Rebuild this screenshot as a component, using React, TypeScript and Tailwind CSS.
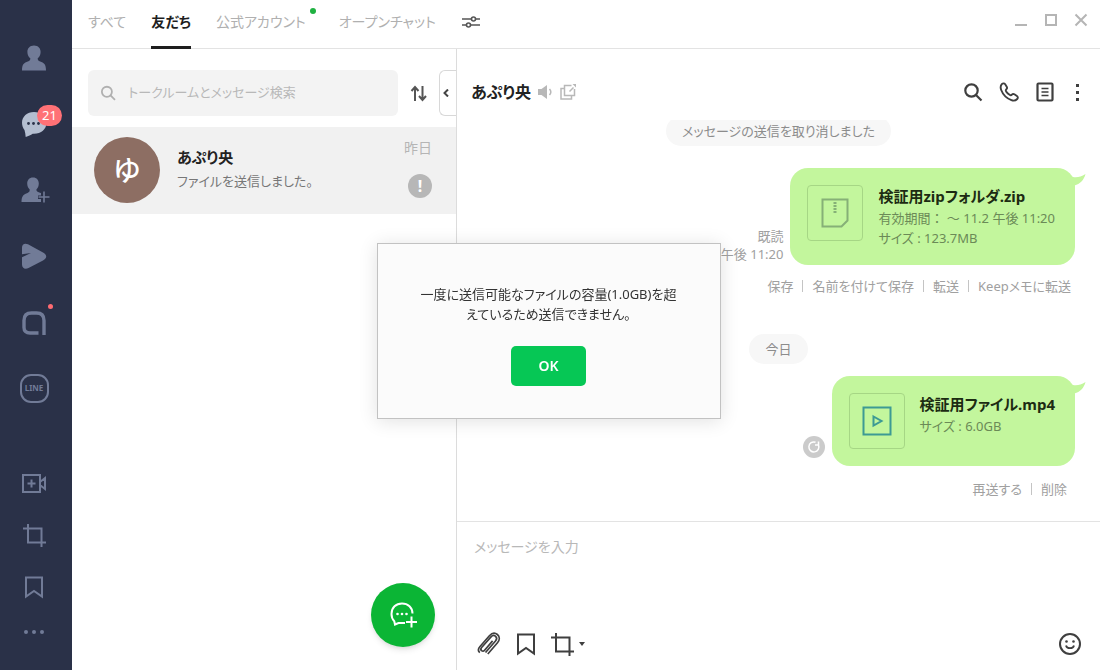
import type { ReactNode } from "react"

type IconProps = { size?: number; stroke?: number; children: ReactNode }

function Icon({ size = 24, stroke = 2, children }: IconProps) {
  return (
    <svg
      width={size}
      height={size}
      viewBox={`0 0 ${size} ${size}`}
      fill="none"
      stroke="currentColor"
      strokeWidth={stroke}
      className="shrink-0"
      aria-hidden="true"
    >
      {children}
    </svg>
  )
}

function PersonShape() {
  return (
    <path
      stroke="none"
      fill="currentColor"
      d="M14 1.500c-4.200 0-6.600 2.900-6.600 6.400 0 2.600 1.200 5 2.900 6.400 0 1.800-0.500 2.500-2.500 3.300C4.300 18.900 2 20.100 2 26.500h24c0-6.400-2.300-7.600-5.800-8.900-2-0.800-2.500-1.500-2.500-3.300 1.700-1.400 2.900-3.800 2.900-6.400C20.600 4.400 18.200 1.500 14 1.500z"
    />
  )
}

function CropShape() {
  return <path d="M6 1v18.500h18M1 5.500h18.500V24" />
}

function BookmarkShape() {
  return <path d="M4 2.500h16v19l-8-5.500-8 5.500z" />
}

function SearchIcon({ size = 20 }: { size?: number }) {
  return (
    <svg
      width={size}
      height={size}
      viewBox="0 0 20 20"
      fill="none"
      stroke="currentColor"
      strokeWidth="2.200"
      aria-hidden="true"
    >
      <circle cx="8.500" cy="8.500" r="6.200" />
      <path d="M13 13l5.500 5.500" />
    </svg>
  )
}

const mainMenu = [
  {
    label: "友だち",
    icon: (
      <Icon size={28}>
        <PersonShape />
      </Icon>
    ),
  },
  {
    label: "トーク",
    badge: "21",
    icon: (
      <Icon size={28}>
        <path
          stroke="none"
          fill="#b4bed0"
          d="M14 2C7 2 2 6.600 2 12.800c0 3 1 5.200 2.500 7.200 0.600 2 1 4.500 1.200 7 2.800-0.700 5-1.800 7-3.200h1.300c7 0 12.500-4.600 12.500-11S21 2 14 2z"
        />
        <g stroke="none" fill="#2a3148">
          <circle cx="8.500" cy="13.500" r="1.400" />
          <circle cx="13.500" cy="13.500" r="1.400" />
          <circle cx="18.500" cy="13.500" r="1.400" />
        </g>
      </Icon>
    ),
  },
  {
    label: "友だち追加",
    icon: (
      <svg width="28" height="28" viewBox="0 0 28 28" className="overflow-visible" aria-hidden="true">
        <path
          fill="currentColor"
          d="M13 1.500c-3.800 0-5.800 2.700-5.800 6 0 2.500 1 4.700 2.500 6 0 2-0.400 2.600-2.200 3.400C4 18.200 1.500 19.500 1.500 26H21v-3h-3v-3.500h3V17c-0.700-0.200-1.400-0.400-2.300-0.800-1.900-0.800-2.300-1.200-2.300-2.700 1.500-1.300 2.400-3.500 2.400-6 0-3.300-2-6-5.800-6z"
        />
        <path d="M24 15.500v11M18.500 21h11" stroke="currentColor" strokeWidth="1.600" />
      </svg>
    ),
  },
  {
    label: "VOOM",
    icon: (
      <Icon size={28}>
        <path
          stroke="none"
          fill="currentColor"
          d="M2 5.500C2 2 4.800 0.800 8 2.200l15 8.300c4.300 2.400 4.300 5.500 0 7.900L8.500 26C5 27.600 2 26.200 2 22.500v-7.300l9-4.200-9 1.200z"
        />
      </Icon>
    ),
  },
  {
    label: "アプリ",
    dot: true,
    icon: (
      <Icon size={28} stroke={3.4}>
        <path d="M18.500 25H10C6 25 4 23 4 19.500v-7C4 7.500 7 5 11.500 5h5C21.500 5 24 7.500 24 12.500V27" />
      </Icon>
    ),
  },
  {
    label: "LINE",
    icon: (
      <span className="flex size-[29px] items-center justify-center rounded-[11px] border-2 border-current text-[8px] font-bold">
        LINE
      </span>
    ),
  },
]

const toolMenu = [
  {
    label: "ミーティング",
    icon: (
      <Icon size={26}>
        <path d="M2 5h17v17H2zM19 12l5-4v11l-5-4M10.500 9.500v8M6.500 13.500h8" />
      </Icon>
    ),
  },
  {
    label: "画面キャプチャ",
    icon: (
      <Icon size={25}>
        <CropShape />
      </Icon>
    ),
  },
  {
    label: "Keepメモ",
    icon: (
      <Icon>
        <BookmarkShape />
      </Icon>
    ),
  },
]

function Sidebar() {
  return (
    <nav className="flex w-18 shrink-0 flex-col bg-[#2a3148] pt-[25px] pr-1 text-[#717b97]">
      {mainMenu.map((item) => (
        <button key={item.label} aria-label={item.label} className="relative flex h-[66px] items-center justify-center">
          {item.icon}
          {item.badge && (
            <span className="absolute top-[14px] left-[37px] flex h-[21px] w-[25px] items-center justify-center rounded-full bg-[#ff7176] text-[13px] text-white">
              {item.badge}
            </span>
          )}
          {item.dot && <span className="absolute top-[15px] left-[48px] size-[5px] rounded-full bg-[#ff6b72]" />}
        </button>
      ))}
      <div className="mt-auto flex flex-col pb-[19px]">
        {toolMenu.map((item) => (
          <button key={item.label} aria-label={item.label} className="flex h-[52px] items-center justify-center">
            {item.icon}
          </button>
        ))}
        <button aria-label="その他" className="flex h-[38px] items-center justify-center gap-1">
          <span className="size-1 rounded-full bg-current" />
          <span className="size-1 rounded-full bg-current" />
          <span className="size-1 rounded-full bg-current" />
        </button>
      </div>
    </nav>
  )
}

function TopBar() {
  return (
    <header className="flex h-[49px] shrink-0 items-stretch border-b border-[#e3e3e3] pr-3 pl-4">
      <div className="flex flex-1 items-stretch gap-[25px] text-sm text-[#b0b0b0]">
        <button className="pb-1">すべて</button>
        <button className="-mb-px border-b-3 border-[#1e1e1e] pt-[2px] pb-1 font-bold text-[#1e1e1e]">友だち</button>
        <button className="relative mr-2 pb-1">
          公式アカウント
          <span className="absolute top-2 -right-2.5 size-[6px] rounded-full bg-[#1fb141]" />
        </button>
        <button className="pb-1">オープンチャット</button>
        <button aria-label="表示設定" className="flex items-center pb-1 text-[#555]">
          <Icon size={20} stroke={1.6}>
            <path d="M1 7h9M15 7h4M1 13h4M10 13h9" />
            <circle cx="12.500" cy="7" r="2" />
            <circle cx="7.500" cy="13" r="2" />
          </Icon>
        </button>
      </div>
      <div className="flex items-center gap-4 pb-2 text-[#b5b5b5]">
        <button aria-label="最小化">
          <Icon size={14}>
            <path d="M1 12h12" />
          </Icon>
        </button>
        <button aria-label="最大化">
          <Icon size={14}>
            <path d="M2 2h10v10H2z" />
          </Icon>
        </button>
        <button aria-label="閉じる">
          <Icon size={14}>
            <path d="M1.500 1.500l11 11M12.500 1.500l-11 11" />
          </Icon>
        </button>
      </div>
    </header>
  )
}

function TalkList() {
  return (
    <aside className="relative flex w-[385px] shrink-0 flex-col border-r border-[#dcdcdc] pt-[21px]">
      <div className="flex items-center pl-4">
        <label className="flex h-[46px] flex-1 items-center gap-3 rounded-md bg-[#f3f3f3] px-3 text-[#b0b0b0]">
          <SearchIcon size={18} />
          <input
            type="text"
            aria-label="検索"
            placeholder="トークルームとメッセージ検索"
            className="w-full min-w-0 bg-transparent text-[13px] outline-none placeholder:text-[#b8b8b8]"
          />
        </label>
        <button aria-label="並べ替え" className="mx-3 text-[#555]">
          <Icon size={17} stroke={2}>
            <path d="M5 16V2M1.500 6L5 2l3.500 4M12.500 1v14M9 11l3.500 4 3.500-4" />
          </Icon>
        </button>
        <button
          aria-label="リストを閉じる"
          className="flex h-[46px] w-[17px] items-center justify-center rounded-l-md border border-r-0 border-[#d8d8d8] pr-1 text-[#444]"
        >
          <Icon size={8} stroke={2}>
            <path d="M6 0.500L2.500 4 6 7.500" />
          </Icon>
        </button>
      </div>

      <a href="#talk" className="mt-[11px] flex h-[87px] items-center bg-[#f1f1f1] pr-6 pb-[2px] pl-[22px]">
        <span className="flex size-[66px] shrink-0 items-center justify-center rounded-full bg-[#8d6e63] text-[28px] font-medium text-white">
          ゆ
        </span>
        <div className="ml-[17px] flex-1 pb-[2px]">
          <p className="text-[15px] leading-6 font-bold text-[#222]">あぷり央</p>
          <p className="text-[13px] leading-6 text-[#777]">ファイルを送信しました。</p>
        </div>
        <div className="flex flex-col items-end gap-4 pb-1 text-sm leading-5 text-[#b5b5b5]">
          <span>昨日</span>
          <span className="flex size-6 items-center justify-center rounded-full bg-[#b7b7b7] text-base font-bold text-white">
            !
          </span>
        </div>
      </a>

      {/* 新規トーク */}
      <button
        aria-label="トークルーム作成"
        className="absolute right-[21px] bottom-[23px] flex size-16 items-center justify-center rounded-full bg-[#0bb535] text-white shadow-md"
      >
        <Icon size={30} stroke={2}>
          <path d="M24.500 13.500C24.500 7.500 20 3.500 14 3.500S3.500 7.500 3.500 14c0 3 1 5.500 2.800 7.200L7 24.500l3.500-1.500h6.500" />
          <path d="M23.500 16.500v11M18 22h11" />
          <g stroke="none" fill="currentColor">
            <circle cx="9.500" cy="14" r="1.300" />
            <circle cx="14" cy="14" r="1.300" />
            <circle cx="18.500" cy="14" r="1.300" />
          </g>
        </Icon>
      </button>
    </aside>
  )
}

function ChatHeader() {
  return (
    <div className="flex shrink-0 items-center justify-between pt-8 pr-[17px] pb-[17px] pl-[14px]">
      <div className="flex items-center gap-[6px] text-[#b8b8b8]">
        <h1 className="text-base leading-[22px] font-bold text-[#222]">あぷり央</h1>
        <Icon size={16} stroke={1.5}>
          <path d="M1 5h3.500L10 1v14l-5.500-4H1z" fill="currentColor" stroke="none" />
          <path d="M12.500 5c1.600 1.800 1.600 4.200 0 6" />
        </Icon>
        <button aria-label="別ウィンドウで開く">
          <Icon size={18} stroke={1.5}>
            <path d="M12.500 2.500H5.500v10h10V6M5 5.500H2v10.500h10.500v-3M10.500 8.500l4-4" />
            <path d="M13.500 1h3.500v3.500z" fill="currentColor" stroke="none" />
          </Icon>
        </button>
      </div>
      <div className="flex items-center gap-4 text-[#3f3f3f]">
        <button aria-label="検索">
          <SearchIcon />
        </button>
        <button aria-label="通話">
          <Icon size={20} stroke={1.9}>
            <path d="M2.800 2.200C3.900 1.100 5.400 1.200 6.200 2.300l1.500 2.400c0.600 1 0.400 1.900-0.400 2.600-0.800 0.800-0.600 1.600 0.100 2.500 0.900 1.200 2 2.200 3.200 3 0.900 0.600 1.600 0.600 2.300-0.200 0.700-0.800 1.600-0.900 2.500-0.300l2.500 1.700c1.100 0.800 1.200 2.100 0.300 3-1.500 1.600-3.500 2.100-5.800 1.200-4.700-1.900-8.500-5.700-10.200-10.200C1.400 5.900 1.500 3.700 2.800 2.200z" />
          </Icon>
        </button>
        <button aria-label="ノート">
          <Icon size={20} stroke={2.2}>
            <rect x="2.500" y="1.500" width="15" height="17" rx="1" />
            <path d="M6.500 6.500h7M6.500 10h7M6.500 13.500h7" strokeWidth="1.500" />
          </Icon>
        </button>
        <button aria-label="メニュー" className="flex w-3 flex-col items-center gap-1">
          <span className="size-[3px] bg-current" />
          <span className="size-[3px] bg-current" />
          <span className="size-[3px] bg-current" />
        </button>
      </div>
    </div>
  )
}

function Bubble({ icon, title, children }: { icon: ReactNode; title: string; children: ReactNode }) {
  return (
    <div className="relative flex gap-[15px] rounded-[18px] bg-[#c3f69d] pt-[17px] pr-5 pb-[17px] pl-[17px]">
      <svg className="absolute top-[5px] -right-[11px]" width="24" height="16" viewBox="0 0 24 16" aria-hidden="true">
        <path d="M0 0L11 4c4 0.600 8 0 12.500-3-1.500 6-5.500 10-11 11.500z" fill="#c3f69d" />
      </svg>
      <div className="flex size-14 shrink-0 items-center justify-center rounded border border-[#a6d685]">{icon}</div>
      <div className="text-[13px] leading-5 text-[#6b8a57]">
        <p className="text-[15px] leading-[23px] font-bold text-[#1c2b12]">{title}</p>
        {children}
      </div>
    </div>
  )
}

function Actions({ items }: { items: string[] }) {
  return (
    <div className="flex items-center text-[13px] leading-5 text-[#a0a0a0]">
      {items.map((item, i) => (
        <div key={item} className="flex items-center">
          {i > 0 && <span className="mx-[9px] h-3 w-px bg-[#c4c4c4]" />}
          <button>{item}</button>
        </div>
      ))}
    </div>
  )
}

function Notice({ children }: { children: string }) {
  return (
    <p className="w-full shrink-0 pl-[25px] text-center">
      <span className="inline-block rounded-full bg-[#f7f7f7] px-4 py-[5px] text-[13px] leading-5 text-[#8c8c8c]">
        {children}
      </span>
    </p>
  )
}

function Messages() {
  return (
    <div className="flex min-h-0 flex-1 flex-col items-end justify-end overflow-hidden pr-[25px] pb-[22px]">
      <Notice>メッセージの送信を取り消しました</Notice>

      <div className="mt-[22px] flex shrink-0 items-end gap-[7px]">
        <div className="pb-[2px] text-right text-[13px] leading-[18px] text-[#a0a0a0]">
          <p>既読</p>
          <p>午後 11:20</p>
        </div>
        <Bubble
          title="検証用zipフォルダ.zip"
          icon={
            <span className="text-[#86b077]">
              <Icon size={32} stroke={2}>
                <path d="M3.500 2.500h25v21l-6 6h-19z" />
                <path d="M16 5v11" strokeWidth="3" strokeDasharray="2 1" />
              </Icon>
            </span>
          }
        >
          <p className="[font-feature-settings:normal]">有効期間： 〜 11.2 午後 11:20</p>
          <p>サイズ : 123.7MB</p>
        </Bubble>
      </div>
      <div className="mt-[11px] pr-1">
        <Actions items={["保存", "名前を付けて保存", "転送", "Keepメモに転送"]} />
      </div>

      <div className="mt-[38px] w-full">
        <Notice>今日</Notice>
      </div>

      <div className="mt-3 flex items-end gap-[7px]">
        <button
          aria-label="再送"
          className="mb-2 flex size-[22px] items-center justify-center rounded-full bg-[#cbcbcb] text-white"
        >
          <Icon size={14} stroke={1.5}>
            <path d="M11.500 5A5 5 0 1 1 8.500 2.200M11.500 1.500V5H8" />
          </Icon>
        </button>
        <Bubble
          title="検証用ファイル.mp4"
          icon={
            <span className="text-[#3d9a94]">
              <Icon size={32} stroke={2}>
                <path d="M2.500 2.500h27v27h-27z" />
                <path d="M12.500 11.500l8 4.500-8 4.500z" />
              </Icon>
            </span>
          }
        >
          <p>サイズ : 6.0GB</p>
        </Bubble>
      </div>
      <div className="mt-[13px] pr-2">
        <Actions items={["再送する", "削除"]} />
      </div>
    </div>
  )
}

function Composer() {
  return (
    <div className="flex h-[149px] shrink-0 flex-col border-t border-[#e3e3e3] pt-[13px] pr-[18px] pb-[13px] pl-[17px]">
      <textarea
        aria-label="メッセージ"
        placeholder="メッセージを入力"
        className="w-full flex-1 resize-none text-sm leading-6 outline-none placeholder:text-[#b8b8b8]"
      />
      <div className="flex items-center justify-between pl-[2px] text-[#3f3f3f]">
        <div className="flex items-center gap-3">
          <button aria-label="ファイル添付">
            <Icon size={26} stroke={1.7}>
              <path d="M9.500 21.500l10-11.500c1.500-1.800 1.300-3.600 0.100-4.700-1.300-1.100-3.200-1-4.600 0.600L5.600 16.500c-1 1.200-0.900 2.400 0 3.200 0.900 0.700 2.100 0.600 3-0.500l8-9.300" />
              <path d="M11.800 23l9.700-11.200c2.500-3 2.200-6.300-0.100-8.300-2.300-2-5.500-1.600-8 1.200L4 15.500c-2 2.300-1.800 4.700-0.200 6.100" />
            </Icon>
          </button>
          <button aria-label="Keep">
            <Icon>
              <BookmarkShape />
            </Icon>
          </button>
          <button aria-label="画面キャプチャ" className="flex items-center gap-1">
            <Icon size={25}>
              <CropShape />
            </Icon>
            <svg width="6" height="4" viewBox="0 0 6 4" aria-hidden="true">
              <path d="M0 0h6L3 4z" fill="currentColor" />
            </svg>
          </button>
        </div>
        <button aria-label="スタンプ">
          <Icon size={24} stroke={2}>
            <circle cx="12" cy="12" r="10" />
            <path d="M8 13.500c0.800 3.600 7.200 3.600 8 0" strokeWidth="1.800" />
            <circle cx="8.500" cy="9.500" r="1.300" fill="currentColor" stroke="none" />
            <circle cx="15.500" cy="9.500" r="1.300" fill="currentColor" stroke="none" />
          </Icon>
        </button>
      </div>
    </div>
  )
}

function FileSizeDialog() {
  return (
    <div className="fixed inset-0 flex items-center justify-center pr-[3px] pb-2">
      <div
        role="alertdialog"
        aria-labelledby="size-message"
        className="flex w-[344px] flex-col items-center border border-[#c2c2c2] bg-[#fbfbfb] px-8 pt-10 pb-8 shadow-[0_2px_18px_rgba(0,0,0,0.12)]"
      >
        <p id="size-message" className="text-center text-[13px] leading-5 text-[#333]">
          一度に送信可能なファイルの容量(1.0GB)を超
          <br />
          えているため送信できません。
        </p>
        <button className="mt-[22px] h-10 w-[75px] rounded-[5px] bg-[#06c755] text-sm font-semibold text-white">
          OK
        </button>
      </div>
    </div>
  )
}

export default function App() {
  return (
    <div className="flex h-screen bg-white font-['Noto_Sans','Noto_Sans_CJK_JP',sans-serif] [font-feature-settings:'palt']">
      <Sidebar />
      <div className="flex min-w-0 flex-1 flex-col">
        <TopBar />
        <div className="flex min-h-0 flex-1">
          <TalkList />
          <main className="flex min-w-0 flex-1 flex-col">
            <ChatHeader />
            <Messages />
            <Composer />
          </main>
        </div>
      </div>
      <FileSizeDialog />
    </div>
  )
}
